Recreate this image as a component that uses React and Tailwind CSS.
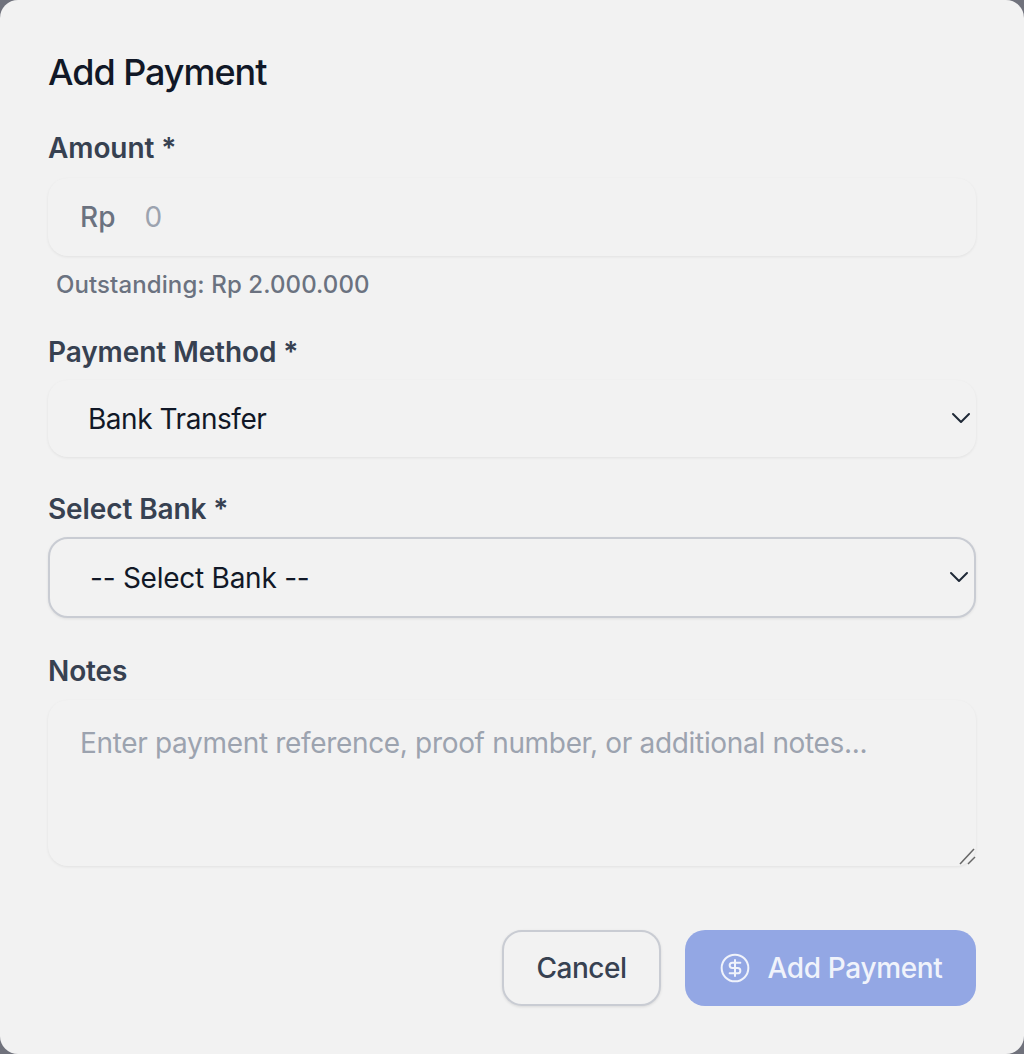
import React from 'react';
import { ChevronDown, CircleDollarSign } from 'lucide-react';

const labelClass = "block h-[34px] text-[28px] leading-[34px] font-semibold tracking-[-0.1px] text-[#374151]";
const softBox = "w-full rounded-[20px] bg-[#f2f2f2] shadow-[0_1px_3px_rgba(0,0,0,0.07)] text-[28px] outline-none";

export default function App() {
  return (
    <div className="h-[1054px] w-[1024px] bg-[#70727c] font-['Inter',sans-serif] antialiased">
      <form className="flex h-full w-full flex-col rounded-[18px] bg-[#f2f2f2] px-12 pt-[50px]">
        <h2 className="h-11 text-[36px] leading-[44px] font-medium tracking-[-1.05px] text-[#111827]">Add Payment</h2>

        {/* Amount */}
        <label className={`${labelClass} mt-[37px]`}>Amount *</label>
        <div className={`${softBox} mt-[13px] flex h-[78px] items-center px-8`}>
          <span className="font-medium text-[#6b7280]">Rp</span>
          <input
            placeholder="0"
            className="ml-[29px] w-full bg-transparent text-[28px] text-[#111827] outline-none placeholder:text-[#9ca3af]"
          />
        </div>
        <p className="mt-[14px] ml-2 h-[29px] text-[24px] leading-[29px] font-medium tracking-[0.1px] text-[#6b7280]">Outstanding: Rp 2.000.000</p>

        {/* Payment method */}
        <label className={`${labelClass} mt-[36px]`}>Payment Method *</label>
        <div className="relative mt-[11px]">
          <select className={`${softBox} block h-[77px] appearance-none px-10 tracking-[-0.46px] text-[#111827]`} defaultValue="bank">
            <option value="bank">Bank Transfer</option>
          </select>
          <ChevronDown className="pointer-events-none absolute top-[22px] right-[-1px] h-8 w-8 text-[#1f2937]" strokeWidth={1.5} />
        </div>

        {/* Bank */}
        <label className={`${labelClass} mt-[35px]`}>Select Bank *</label>
        <div className="relative mt-[11px]">
          <select className="block h-[81px] w-full appearance-none rounded-[20px] border-2 border-[#c9ccd3] bg-[#f2f2f2] px-10 text-[28px] tracking-[-0.25px] text-[#111827] shadow-[0_1px_3px_rgba(0,0,0,0.08)] outline-none" defaultValue="">
            <option value="">-- Select Bank --</option>
          </select>
          <ChevronDown className="pointer-events-none absolute top-[24px] right-[1px] h-8 w-8 text-[#1f2937]" strokeWidth={1.5} />
        </div>

        {/* Notes */}
        <label className={`${labelClass} mt-[36px]`}>Notes</label>
        <div className="relative mt-[12px]">
          <textarea
            placeholder="Enter payment reference, proof number, or additional notes..."
            className={`${softBox} block h-[166px] resize-none px-8 pt-[26px] pb-5 leading-[34px] tracking-[-0.33px] text-[#111827] placeholder:text-[#9ca3af]`}
          />
          <svg className="pointer-events-none absolute right-0 bottom-0 h-5 w-5" viewBox="0 0 20 20" fill="none" stroke="#666" strokeWidth="1.5">
            <path d="M4 18 L18 3" />
            <path d="M12 18 L19 11" />
          </svg>
        </div>

        {/* Actions */}
        <div className="mt-16 flex justify-end gap-6">
          <button type="button" className="h-[76px] w-[159px] rounded-[20px] border-2 border-[#c9ccd3] bg-[#f2f2f2] text-[28px] font-medium tracking-[-0.5px] text-[#374151] shadow-[0_1px_3px_rgba(0,0,0,0.1)]">
            Cancel
          </button>
          <button type="button" className="flex h-[76px] w-[291px] items-center justify-center gap-[17px] rounded-[20px] bg-[#93a7e4] text-[28px] font-medium tracking-[-0.36px] text-[#f0f3fb]">
            <CircleDollarSign className="h-8 w-8" strokeWidth={1.5} />
            Add Payment
          </button>
        </div>
      </form>
    </div>
  );
}
